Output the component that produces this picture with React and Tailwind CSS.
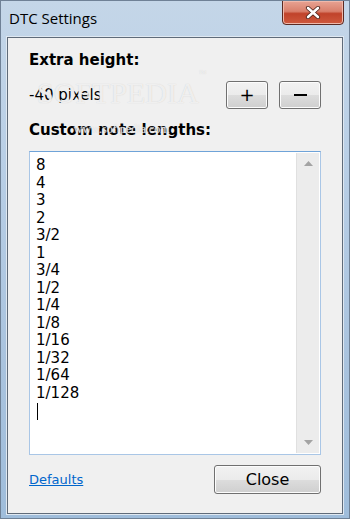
import React from 'react';

const lengths = ['8', '4', '3', '2', '3/2', '1', '3/4', '1/2', '1/4', '1/8', '1/16', '1/32', '1/64', '1/128'];

const btn =
  'flex items-center justify-center rounded-[3px] border border-[#707070] bg-[linear-gradient(#f2f2f2_0%,#ebebeb_50%,#dddddd_50%,#cfcfcf_100%)] shadow-[inset_0_0_0_1px_#fcfcfc] text-black';

const ui = { fontFamily: '"DejaVu Sans", "Noto Sans", sans-serif' };

const App = () => {
  return (
    <div
      className="w-[350px] h-[519px] flex flex-col bg-[linear-gradient(180deg,#c4d6e8_0%,#b9cfe6_30%,#a9c3de_70%,#9fbddb_100%)] border border-[#6f8196] overflow-hidden"
      style={{ fontFamily: '"Open Sans", "Noto Sans", sans-serif' }}
    >
      {/* title bar */}
      <div className="h-[36px] flex items-start justify-between">
        <span className="mt-[6px] ml-[8px] text-[15px] text-black">DTC Settings</span>
        <div className="mr-[5px] mt-[-1px] w-[62px] h-[25px] rounded-b-[4px] border border-[#5b2a22] bg-[linear-gradient(#e8a393_0%,#d9806c_45%,#c0432b_55%,#cf5a3e_100%)] shadow-[inset_0_0_0_1px_#efb9ab] flex items-center justify-center">
          <svg width="16" height="13" viewBox="0 0 16 13">
            <path d="M3 2 L13 11 M13 2 L3 11" stroke="#4a2018" strokeWidth="4.2" strokeLinecap="round" />
            <path d="M3 2 L13 11 M13 2 L3 11" stroke="#ffffff" strokeWidth="2.6" strokeLinecap="round" />
          </svg>
        </div>
      </div>

      {/* client area */}
      <div
        className="relative mx-[6px] mb-[4px] flex-1 flex flex-col border border-[#5f6b79] bg-[#f0f0f0] shadow-[0_0_0_1px_#dfe8f1] pl-[21px] pr-[21px]"
        style={ui}
      >
        <div className="mt-[12px] text-[15px] font-bold text-black leading-[20px]">Extra height:</div>
        <div className="mt-[11px] flex items-center">
          <span className="text-[15px] text-black flex-1">-40 pixels</span>
          <div className={btn + ' w-[42px] h-[28px] text-[18px] leading-none'}>+</div>
          <div className={btn + ' ml-[11px] w-[42px] h-[28px]'}>
            <span className="block w-[13px] h-[2px] bg-black" />
          </div>
        </div>
        <div className="mt-[11px] text-[15px] font-bold text-black leading-[20px]">Custom note lengths:</div>

        {/* text box */}
        <div className="mt-[11px] h-[304px] flex border border-[#a9c6e6] border-t-[#6fa3d8] bg-white">
          <div className="flex-1 pl-[6px] pt-[5px] text-[15px] text-black leading-[17.5px]">
            {lengths.map((l) => (
              <div key={l}>{l}</div>
            ))}
            <div className="mt-[1px] ml-[1px] w-[1px] h-[17px] bg-black" />
          </div>
          <div className="w-[23px] my-[1px] mr-[1px] bg-[#ececec] border-l border-[#e0e0e0] flex flex-col justify-between items-center py-[8px]">
            <svg width="9" height="5" viewBox="0 0 9 5">
              <path d="M0 5 L4.5 0 L9 5 Z" fill="#a3a3a3" />
            </svg>
            <svg width="9" height="5" viewBox="0 0 9 5">
              <path d="M0 0 L4.5 5 L9 0 Z" fill="#a3a3a3" />
            </svg>
          </div>
        </div>

        {/* bottom row */}
        <div className="mt-[10px] flex items-center justify-between">
          <span className="text-[13px] text-[#0066cc] underline">Defaults</span>
          <div className={btn + ' w-[107px] h-[29px] text-[16px]'}>Close</div>
        </div>

        {/* watermark */}
        <div className="absolute left-[29px] top-[40px] pointer-events-none select-none text-center">
          <div
            className="text-[30px] text-white/70 leading-none"
            style={{ fontFamily: '"Liberation Serif", serif', textShadow: '0 0 1px #c8c8c8' }}
          >
            SOFTPEDIA<sup className="text-[8px] align-top">™</sup>
          </div>
          <div
            className="mt-[12px] text-[12px] text-white/70"
            style={{ fontFamily: '"Liberation Serif", serif', textShadow: '0 0 1px #c8c8c8' }}
          >
            www.softpedia.com
          </div>
        </div>
      </div>
    </div>
  );
};

export default App;
